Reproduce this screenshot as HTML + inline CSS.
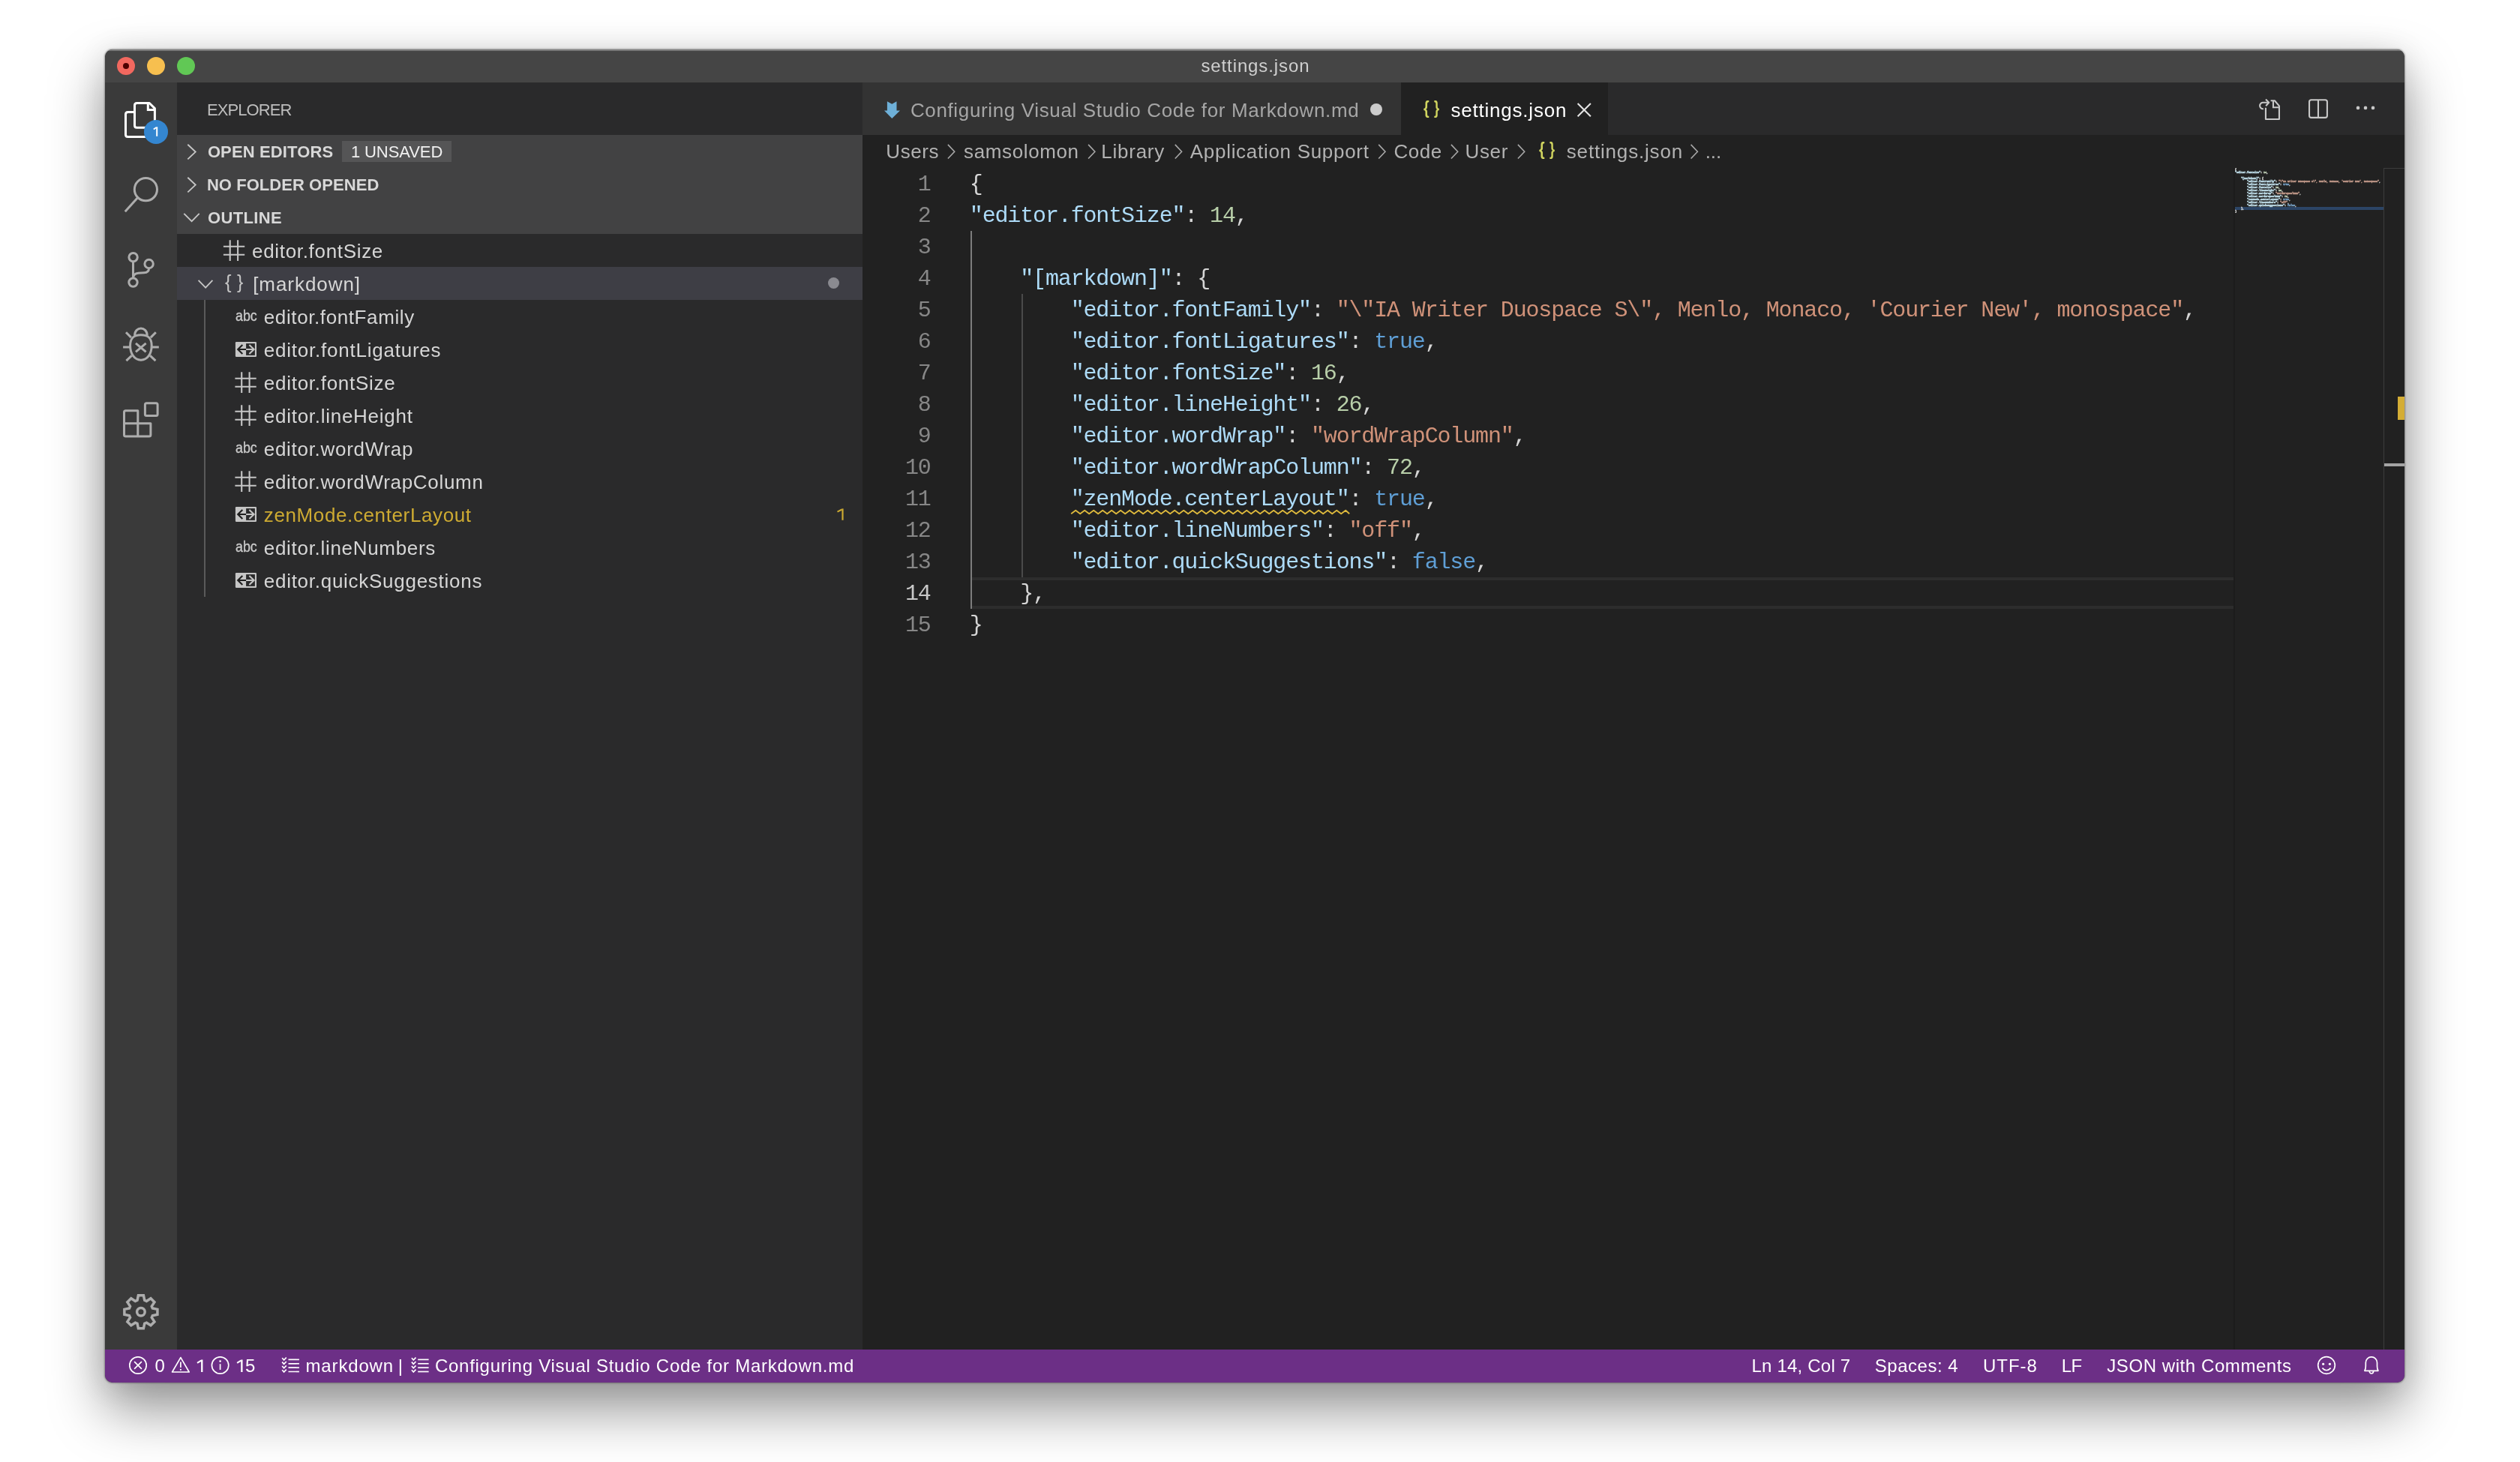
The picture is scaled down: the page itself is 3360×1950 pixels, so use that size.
<!DOCTYPE html>
<html><head><meta charset="utf-8"><title>settings.json</title>
<style>
html,body{margin:0;padding:0;}
body{width:3360px;height:1950px;background:#ffffff;overflow:hidden;position:relative;font-family:"Liberation Sans",sans-serif;}
#win{position:absolute;left:140px;top:66px;width:3066px;height:1778px;border-radius:10px;overflow:hidden;background:#212121;will-change:transform;}
#shadow{position:absolute;left:140px;top:66px;width:3066px;height:1778px;border-radius:10px;box-shadow:0 0 2px 1px rgba(0,0,0,0.30),0 36px 72px 2px rgba(0,0,0,0.40),0 4px 40px rgba(0,0,0,0.10);}
.b{position:absolute;display:block;}
.t{position:absolute;white-space:pre;line-height:1;font-family:"Liberation Sans",sans-serif;}
.m{position:absolute;white-space:pre;line-height:1;font-family:"Liberation Mono",monospace;}
</style></head><body>
<div id="shadow"></div>
<div id="win">
<div class="b" style="left:0px;top:0px;width:3066px;height:44px;background:#454545;"></div>
<div class="b" style="left:0px;top:0px;width:3066px;height:1.5px;background:rgba(255,255,255,0.28);"></div>
<div class="b" style="left:0px;top:44px;width:96px;height:1690px;background:#3a3a3a;"></div>
<div class="b" style="left:96px;top:44px;width:914px;height:1690px;background:#2a2a2b;"></div>
<div class="b" style="left:1010px;top:44px;width:2056px;height:70px;background:#2a2a2b;"></div>
<div class="b" style="left:1010px;top:44px;width:718px;height:70px;background:#333333;"></div>
<div class="b" style="left:1728px;top:44px;width:276px;height:70px;background:#212121;"></div>
<div class="b" style="left:1010px;top:114px;width:2056px;height:1620px;background:#212121;"></div>
<div class="b" style="left:0px;top:1734px;width:3066px;height:44px;background:#6c2f86;"></div>
<div class="b" style="left:96px;top:114px;width:914px;height:132px;background:#424243;"></div>
<div class="b" style="left:96px;top:290px;width:914px;height:44px;background:#3e3e45;"></div>
<div class="b" style="left:316px;top:122px;width:146px;height:28px;background:#555556;"></div>
<div class="b" style="left:132px;top:334px;width:2px;height:396px;background:#5a5a5a;"></div>
<div class="b" style="left:964px;top:304px;width:15px;height:15px;background:#8a8a90;border-radius:50%;"></div>
<div class="b" style="left:1687px;top:72px;width:16px;height:16px;background:#cccccc;border-radius:50%;"></div>
<div class="b" style="left:16px;top:10px;width:24px;height:24px;background:#f2685f;border-radius:50%;"></div>
<div class="b" style="left:56px;top:10px;width:24px;height:24px;background:#f7bf4f;border-radius:50%;"></div>
<div class="b" style="left:96px;top:10px;width:24px;height:24px;background:#61c855;border-radius:50%;"></div>
<div class="b" style="left:24px;top:18px;width:8px;height:8px;background:#4d0000;border-radius:50%;"></div>
<svg class="b" style="left:20px;top:64px;" width="70" height="66" viewBox="160 130 70 66"><g fill="none" stroke="#ffffff" stroke-width="3" stroke-linejoin="round"><path d="M199.2,137.5 H182.5 Q179.5,137.5 179.5,140.5 V167.2 Q179.5,170.2 182.5,170.2 H206.4 V144.6 Z"/><path d="M197.3,137.5 V146.5 H206.4" stroke-linejoin="miter"/><path d="M179.5,149.5 H170.5 Q167.5,149.5 167.5,152.5 V179.4 Q167.5,182.4 170.5,182.4 H192.5 Q195.5,182.4 195.5,179.4 V170.2"/></g><circle cx="208" cy="175.9" r="16" fill="#3486d0"/></svg>
<svg class="b" style="left:20px;top:164px;" width="60" height="60" viewBox="160 230 60 60"><g fill="none" stroke="#adadad" stroke-width="3"><circle cx="194.4" cy="252.7" r="15.1"/><path d="M183.7,263.4 L166.8,282.3"/></g></svg>
<svg class="b" style="left:20px;top:264px;" width="60" height="60" viewBox="160 330 60 60"><g fill="none" stroke="#adadad" stroke-width="3"><circle cx="177.6" cy="343.1" r="5.7"/><circle cx="177.5" cy="376.6" r="5.7"/><circle cx="198.6" cy="352" r="5.7"/><path d="M177.5,348.8 V370.9"/><path d="M198.6,357.7 Q198.6,363.4 192,363.8 L184.5,364.3 Q177.6,365 177.6,371"/></g></svg>
<svg class="b" style="left:20px;top:364px;" width="60" height="60" viewBox="160 430 60 60"><g fill="none" stroke="#adadad" stroke-width="3"><path d="M187.9,446.8 C197,446.8 202.2,450 202.2,461 C202.2,472 196.5,480.2 187.9,480.2 C179.3,480.2 173.6,472 173.6,461 C173.6,450 178.8,446.8 187.9,446.8 Z"/><path d="M179.6,447.5 C179.6,434.8 196.2,434.8 196.2,447.5"/><path d="M168,443.3 L174.8,450.1 M207.8,443.3 L201,450.1 M164.1,463 H173 M211.8,463 H202.8 M168.4,481.2 L175.6,474.4 M207.4,481.2 L200.2,474.4"/><path d="M181,457.8 L194.6,469.4 M194.6,457.8 L181,469.4"/></g></svg>
<svg class="b" style="left:20px;top:464px;" width="60" height="60" viewBox="160 530 60 60"><g fill="none" stroke="#adadad" stroke-width="3" stroke-linejoin="round"><path d="M167.5,547.7 H183.8 V564.8 H200.9 V579.9 Q200.9,581.9 198.9,581.9 H167.5 Q165.5,581.9 165.5,579.9 V549.7 Q165.5,547.7 167.5,547.7 Z"/><path d="M165.5,564.8 H183.8 V581.9"/><rect x="193.4" y="537.8" width="16.7" height="16.7" rx="2"/></g></svg>
<svg class="b" style="left:20px;top:1654px;" width="60" height="60" viewBox="160 1720 60 60"><g fill="none" stroke="#adadad" stroke-width="3.5" stroke-linejoin="miter"><path d="M183.03,1734.35 L184.41,1727.77 L191.39,1727.77 L192.77,1734.35 L195.38,1735.43 L201.01,1731.76 L205.94,1736.69 L202.27,1742.32 L203.35,1744.93 L209.93,1746.31 L209.93,1753.29 L203.35,1754.67 L202.27,1757.28 L205.94,1762.91 L201.01,1767.84 L195.38,1764.17 L192.77,1765.25 L191.39,1771.83 L184.41,1771.83 L183.03,1765.25 L180.42,1764.17 L174.79,1767.84 L169.86,1762.91 L173.53,1757.28 L172.45,1754.67 L165.87,1753.29 L165.87,1746.31 L172.45,1744.93 L173.53,1742.32 L169.86,1736.69 L174.79,1731.76 L180.42,1735.43 Z"/><circle cx="187.9" cy="1749.8" r="5.3"/></g></svg>
<svg class="b" style="left:100px;top:114px;" width="60" height="220" viewBox="240 180 60 220"><g fill="none" stroke="#c5c5c5" stroke-width="1.9"><path d="M250.3,192.8 L260.7,202.6 L250.3,212.4"/><path d="M250.3,236.8 L260.7,246.6 L250.3,256.4"/><path d="M245.3,284.9 L255.6,295.2 L265.7,284.9"/><path d="M264.6,373.9 L274.1,383.6 L283.4,373.9"/></g></svg>
<svg class="b" style="left:150px;top:246px;" width="70" height="490" viewBox="290 312 70 490"><path d="M306.7,320.2 V347.9 M317.09999999999997,320.2 V347.9 M297.9,328.7 H326.2 M297.9,339.7 H326.2" fill="none" stroke="#c5c5c5" stroke-width="2.1"/><rect x="313.9" y="456" width="28.1" height="20" rx="1.2" fill="#c5c5c5"/><rect x="328.1" y="458.1" width="11.8" height="15.8" fill="#2a2a2b"/><path d="M323.3,459.9 L317.2,466 L323.3,472.1 M317.4,466 H328.1" fill="none" stroke="#1e1e1e" stroke-width="2.1"/><path d="M332.4,460 L338.6,466 L332.4,472 M328.1,466 H338.4" fill="none" stroke="#c5c5c5" stroke-width="2.1"/><path d="M322.2,496.2 V523.9 M332.59999999999997,496.2 V523.9 M313.4,504.7 H341.7 M313.4,515.7 H341.7" fill="none" stroke="#c5c5c5" stroke-width="2.1"/><path d="M322.2,540.2 V567.9 M332.59999999999997,540.2 V567.9 M313.4,548.7 H341.7 M313.4,559.7 H341.7" fill="none" stroke="#c5c5c5" stroke-width="2.1"/><path d="M322.2,628.2 V655.9 M332.59999999999997,628.2 V655.9 M313.4,636.7 H341.7 M313.4,647.7 H341.7" fill="none" stroke="#c5c5c5" stroke-width="2.1"/><rect x="313.9" y="676" width="28.1" height="20" rx="1.2" fill="#c5c5c5"/><rect x="328.1" y="678.1" width="11.8" height="15.8" fill="#2a2a2b"/><path d="M323.3,679.9 L317.2,686 L323.3,692.1 M317.4,686 H328.1" fill="none" stroke="#1e1e1e" stroke-width="2.1"/><path d="M332.4,680 L338.6,686 L332.4,692 M328.1,686 H338.4" fill="none" stroke="#c5c5c5" stroke-width="2.1"/><rect x="313.9" y="764" width="28.1" height="20" rx="1.2" fill="#c5c5c5"/><rect x="328.1" y="766.1" width="11.8" height="15.8" fill="#2a2a2b"/><path d="M323.3,767.9 L317.2,774 L323.3,780.1 M317.4,774 H328.1" fill="none" stroke="#1e1e1e" stroke-width="2.1"/><path d="M332.4,768 L338.6,774 L332.4,780 M328.1,774 H338.4" fill="none" stroke="#c5c5c5" stroke-width="2.1"/></svg>
<svg class="b" style="left:60px;top:99px;" width="16" height="22" viewBox="200 165 16 22"><path d="M209.20,169.20 V181.80" stroke="#ffffff" stroke-width="2.0" fill="none"/><path d="M204.80,172.60 L208.40,170.08" stroke="#ffffff" stroke-width="1.84" fill="none"/></svg>
<svg class="b" style="left:970px;top:604px;" width="20" height="30" viewBox="1110 670 20 30"><path d="M1123.50,678.40 V693.80" stroke="#cdaa32" stroke-width="2.2" fill="none"/><path d="M1116.50,682.56 L1122.60,679.48" stroke="#cdaa32" stroke-width="2.02" fill="none"/></svg>
<svg class="b" style="left:118px;top:1742px;" width="70" height="26" viewBox="258 1808 70 26"><path d="M269.25,1813.40 V1829.90" stroke="#ffffff" stroke-width="2.3" fill="none"/><path d="M263.00,1817.86 L268.30,1814.56" stroke="#ffffff" stroke-width="2.12" fill="none"/><path d="M322.35,1813.40 V1829.90" stroke="#ffffff" stroke-width="2.3" fill="none"/><path d="M316.10,1817.86 L321.40,1814.56" stroke="#ffffff" stroke-width="2.12" fill="none"/></svg>
<div class="b" style="left:1156px;top:704px;width:1684px;height:4px;background:#2d2d2d;"></div>
<div class="b" style="left:1156px;top:742px;width:1684px;height:4px;background:#2d2d2d;"></div>
<div class="b" style="left:1154px;top:242px;width:2px;height:504px;background:#7c7c7c;"></div>
<div class="b" style="left:1222px;top:326px;width:2px;height:378px;background:#4a4a4a;"></div>
<div class="m" style="left:1152.80px;top:164.82px;font-size:30px;letter-spacing:-1.1469px"><span style="color:#d6d6d6">{</span></div>
<div class="m" style="left:1083.84px;top:164.82px;font-size:30px;letter-spacing:-1.1469px;color:#878787">1</div>
<div class="m" style="left:1152.80px;top:206.82px;font-size:30px;letter-spacing:-1.1469px"><span style="color:#addbf8">&quot;editor.fontSize&quot;</span><span style="color:#d6d6d6">: </span><span style="color:#b8cfa9">14</span><span style="color:#d6d6d6">,</span></div>
<div class="m" style="left:1083.84px;top:206.82px;font-size:30px;letter-spacing:-1.1469px;color:#878787">2</div>
<div class="m" style="left:1083.84px;top:248.82px;font-size:30px;letter-spacing:-1.1469px;color:#878787">3</div>
<div class="m" style="left:1152.80px;top:290.82px;font-size:30px;letter-spacing:-1.1469px"><span style="color:#d6d6d6">    </span><span style="color:#addbf8">&quot;[markdown]&quot;</span><span style="color:#d6d6d6">: {</span></div>
<div class="m" style="left:1083.84px;top:290.82px;font-size:30px;letter-spacing:-1.1469px;color:#878787">4</div>
<div class="m" style="left:1152.80px;top:332.82px;font-size:30px;letter-spacing:-1.1469px"><span style="color:#d6d6d6">        </span><span style="color:#addbf8">&quot;editor.fontFamily&quot;</span><span style="color:#d6d6d6">: </span><span style="color:#d09279">&quot;\&quot;IA Writer Duospace S\&quot;, Menlo, Monaco, &#x27;Courier New&#x27;, monospace&quot;</span><span style="color:#d6d6d6">,</span></div>
<div class="m" style="left:1083.84px;top:332.82px;font-size:30px;letter-spacing:-1.1469px;color:#878787">5</div>
<div class="m" style="left:1152.80px;top:374.82px;font-size:30px;letter-spacing:-1.1469px"><span style="color:#d6d6d6">        </span><span style="color:#addbf8">&quot;editor.fontLigatures&quot;</span><span style="color:#d6d6d6">: </span><span style="color:#5f9fd6">true</span><span style="color:#d6d6d6">,</span></div>
<div class="m" style="left:1083.84px;top:374.82px;font-size:30px;letter-spacing:-1.1469px;color:#878787">6</div>
<div class="m" style="left:1152.80px;top:416.82px;font-size:30px;letter-spacing:-1.1469px"><span style="color:#d6d6d6">        </span><span style="color:#addbf8">&quot;editor.fontSize&quot;</span><span style="color:#d6d6d6">: </span><span style="color:#b8cfa9">16</span><span style="color:#d6d6d6">,</span></div>
<div class="m" style="left:1083.84px;top:416.82px;font-size:30px;letter-spacing:-1.1469px;color:#878787">7</div>
<div class="m" style="left:1152.80px;top:458.82px;font-size:30px;letter-spacing:-1.1469px"><span style="color:#d6d6d6">        </span><span style="color:#addbf8">&quot;editor.lineHeight&quot;</span><span style="color:#d6d6d6">: </span><span style="color:#b8cfa9">26</span><span style="color:#d6d6d6">,</span></div>
<div class="m" style="left:1083.84px;top:458.82px;font-size:30px;letter-spacing:-1.1469px;color:#878787">8</div>
<div class="m" style="left:1152.80px;top:500.82px;font-size:30px;letter-spacing:-1.1469px"><span style="color:#d6d6d6">        </span><span style="color:#addbf8">&quot;editor.wordWrap&quot;</span><span style="color:#d6d6d6">: </span><span style="color:#d09279">&quot;wordWrapColumn&quot;</span><span style="color:#d6d6d6">,</span></div>
<div class="m" style="left:1083.84px;top:500.82px;font-size:30px;letter-spacing:-1.1469px;color:#878787">9</div>
<div class="m" style="left:1152.80px;top:542.82px;font-size:30px;letter-spacing:-1.1469px"><span style="color:#d6d6d6">        </span><span style="color:#addbf8">&quot;editor.wordWrapColumn&quot;</span><span style="color:#d6d6d6">: </span><span style="color:#b8cfa9">72</span><span style="color:#d6d6d6">,</span></div>
<div class="m" style="left:1066.99px;top:542.82px;font-size:30px;letter-spacing:-1.1469px;color:#878787">10</div>
<div class="m" style="left:1152.80px;top:584.82px;font-size:30px;letter-spacing:-1.1469px"><span style="color:#d6d6d6">        </span><span style="color:#addbf8">&quot;zenMode.centerLayout&quot;</span><span style="color:#d6d6d6">: </span><span style="color:#5f9fd6">true</span><span style="color:#d6d6d6">,</span></div>
<div class="m" style="left:1066.99px;top:584.82px;font-size:30px;letter-spacing:-1.1469px;color:#878787">11</div>
<div class="m" style="left:1152.80px;top:626.82px;font-size:30px;letter-spacing:-1.1469px"><span style="color:#d6d6d6">        </span><span style="color:#addbf8">&quot;editor.lineNumbers&quot;</span><span style="color:#d6d6d6">: </span><span style="color:#d09279">&quot;off&quot;</span><span style="color:#d6d6d6">,</span></div>
<div class="m" style="left:1066.99px;top:626.82px;font-size:30px;letter-spacing:-1.1469px;color:#878787">12</div>
<div class="m" style="left:1152.80px;top:668.82px;font-size:30px;letter-spacing:-1.1469px"><span style="color:#d6d6d6">        </span><span style="color:#addbf8">&quot;editor.quickSuggestions&quot;</span><span style="color:#d6d6d6">: </span><span style="color:#5f9fd6">false</span><span style="color:#d6d6d6">,</span></div>
<div class="m" style="left:1066.99px;top:668.82px;font-size:30px;letter-spacing:-1.1469px;color:#878787">13</div>
<div class="m" style="left:1152.80px;top:710.82px;font-size:30px;letter-spacing:-1.1469px"><span style="color:#d6d6d6">    </span><span style="color:#d6d6d6">},</span></div>
<div class="m" style="left:1066.99px;top:710.82px;font-size:30px;letter-spacing:-1.1469px;color:#c8c8c8">14</div>
<div class="m" style="left:1152.80px;top:752.82px;font-size:30px;letter-spacing:-1.1469px"><span style="color:#d6d6d6">}</span></div>
<div class="m" style="left:1066.99px;top:752.82px;font-size:30px;letter-spacing:-1.1469px;color:#878787">15</div>
<svg class="b" style="left:1280px;top:608px;" width="390" height="16" viewBox="1420 674 390 16"><path d="M1428.2,685.3 L1434.2,680.7 L1440.2,685.3 L1446.2,680.7 L1452.2,685.3 L1458.2,680.7 L1464.2,685.3 L1470.2,680.7 L1476.2,685.3 L1482.2,680.7 L1488.2,685.3 L1494.2,680.7 L1500.2,685.3 L1506.2,680.7 L1512.2,685.3 L1518.2,680.7 L1524.2,685.3 L1530.2,680.7 L1536.2,685.3 L1542.2,680.7 L1548.2,685.3 L1554.2,680.7 L1560.2,685.3 L1566.2,680.7 L1572.2,685.3 L1578.2,680.7 L1584.2,685.3 L1590.2,680.7 L1596.2,685.3 L1602.2,680.7 L1608.2,685.3 L1614.2,680.7 L1620.2,685.3 L1626.2,680.7 L1632.2,685.3 L1638.2,680.7 L1644.2,685.3 L1650.2,680.7 L1656.2,685.3 L1662.2,680.7 L1668.2,685.3 L1674.2,680.7 L1680.2,685.3 L1686.2,680.7 L1692.2,685.3 L1698.2,680.7 L1704.2,685.3 L1710.2,680.7 L1716.2,685.3 L1722.2,680.7 L1728.2,685.3 L1734.2,680.7 L1740.2,685.3 L1746.2,680.7 L1752.2,685.3 L1758.2,680.7 L1764.2,685.3 L1770.2,680.7 L1776.2,685.3 L1782.2,680.7 L1788.2,685.3 L1794.2,680.7 L1799.2,685.3" fill="none" stroke="#dcb83c" stroke-width="1.9" stroke-linejoin="round"/></svg>
<svg class="b" style="left:2838px;top:158px;" width="202" height="64" viewBox="2978 224 202 64"><rect x="2980" y="276" width="198" height="4" fill="#2c4566"/></svg>
<div class="m" style="left:2840px;top:158px;font-size:30px;letter-spacing:-1.1469px;font-weight:bold;-webkit-text-stroke:5px;transform:scale(0.11865,0.09524);transform-origin:0 0;opacity:0.85;filter:saturate(0.65) brightness(1.12)"><div style="height:42px;line-height:42px"><span style="color:#d6d6d6">{</span></div><div style="height:42px;line-height:42px"><span style="color:#addbf8">&quot;editor.fontSize&quot;</span><span style="color:#d6d6d6">: </span><span style="color:#b8cfa9">14</span><span style="color:#d6d6d6">,</span></div><div style="height:42px;line-height:42px"></div><div style="height:42px;line-height:42px"><span style="color:#d6d6d6">    </span><span style="color:#addbf8">&quot;[markdown]&quot;</span><span style="color:#d6d6d6">: {</span></div><div style="height:42px;line-height:42px"><span style="color:#d6d6d6">        </span><span style="color:#addbf8">&quot;editor.fontFamily&quot;</span><span style="color:#d6d6d6">: </span><span style="color:#d09279">&quot;\&quot;IA Writer Duospace S\&quot;, Menlo, Monaco, &#x27;Courier New&#x27;, monospace&quot;</span><span style="color:#d6d6d6">,</span></div><div style="height:42px;line-height:42px"><span style="color:#d6d6d6">        </span><span style="color:#addbf8">&quot;editor.fontLigatures&quot;</span><span style="color:#d6d6d6">: </span><span style="color:#5f9fd6">true</span><span style="color:#d6d6d6">,</span></div><div style="height:42px;line-height:42px"><span style="color:#d6d6d6">        </span><span style="color:#addbf8">&quot;editor.fontSize&quot;</span><span style="color:#d6d6d6">: </span><span style="color:#b8cfa9">16</span><span style="color:#d6d6d6">,</span></div><div style="height:42px;line-height:42px"><span style="color:#d6d6d6">        </span><span style="color:#addbf8">&quot;editor.lineHeight&quot;</span><span style="color:#d6d6d6">: </span><span style="color:#b8cfa9">26</span><span style="color:#d6d6d6">,</span></div><div style="height:42px;line-height:42px"><span style="color:#d6d6d6">        </span><span style="color:#addbf8">&quot;editor.wordWrap&quot;</span><span style="color:#d6d6d6">: </span><span style="color:#d09279">&quot;wordWrapColumn&quot;</span><span style="color:#d6d6d6">,</span></div><div style="height:42px;line-height:42px"><span style="color:#d6d6d6">        </span><span style="color:#addbf8">&quot;editor.wordWrapColumn&quot;</span><span style="color:#d6d6d6">: </span><span style="color:#b8cfa9">72</span><span style="color:#d6d6d6">,</span></div><div style="height:42px;line-height:42px"><span style="color:#d6d6d6">        </span><span style="color:#addbf8">&quot;zenMode.centerLayout&quot;</span><span style="color:#d6d6d6">: </span><span style="color:#5f9fd6">true</span><span style="color:#d6d6d6">,</span></div><div style="height:42px;line-height:42px"><span style="color:#d6d6d6">        </span><span style="color:#addbf8">&quot;editor.lineNumbers&quot;</span><span style="color:#d6d6d6">: </span><span style="color:#d09279">&quot;off&quot;</span><span style="color:#d6d6d6">,</span></div><div style="height:42px;line-height:42px"><span style="color:#d6d6d6">        </span><span style="color:#addbf8">&quot;editor.quickSuggestions&quot;</span><span style="color:#d6d6d6">: </span><span style="color:#5f9fd6">false</span><span style="color:#d6d6d6">,</span></div><div style="height:42px;line-height:42px"><span style="color:#d6d6d6">    </span><span style="color:#d6d6d6">},</span></div><div style="height:42px;line-height:42px"><span style="color:#d6d6d6">}</span></div></div>
<div class="b" style="left:2838px;top:158px;width:2px;height:1576px;background:#1c1c1c;"></div>
<div class="b" style="left:3038px;top:158px;width:1px;height:1576px;background:#3c3c3c;"></div>
<div class="b" style="left:3038px;top:158px;width:28px;height:1px;background:#3c3c3c;"></div>
<div class="b" style="left:3057px;top:463px;width:9px;height:31px;background:#d4ad35;"></div>
<div class="b" style="left:3039px;top:552px;width:27px;height:4px;background:#a4a4a4;"></div>
<svg class="b" style="left:1030px;top:59px;" width="40" height="40" viewBox="1170 125 40 40"><path d="M1182.9,135.2 L1189.3,138.8 L1195.5,135.2 V147.4 H1200 L1189.3,158.1 L1179,147.4 H1182.9 Z" fill="#6eb0d8"/></svg>
<svg class="b" style="left:1955px;top:64px;" width="35" height="35" viewBox="2095 130 35 35"><path d="M2103.6,138 L2120.9,155.3 M2120.9,138 L2103.6,155.3" fill="none" stroke="#e4e4e4" stroke-width="2.1"/></svg>
<svg class="b" style="left:2865px;top:59px;" width="170" height="45" viewBox="3005 125 170 45"><g fill="none" stroke="#c8c8c8" stroke-width="2.1" stroke-linejoin="round"><path d="M3020.95,143.8 V159 H3038.95 V141.4 L3032.9,134.3 H3027.6"/><path d="M3030.95,134.3 V143.3 H3038.95" stroke-linejoin="miter"/><path d="M3017.9,145.25 A4.27,4.27 0 1 1 3016.9,136.7 H3024.8"/><path d="M3021,132.6 L3025.2,136.7 L3021.2,141.2"/><rect x="3079.05" y="133.2" width="23.85" height="23.7" rx="2.6"/><path d="M3090.95,133.2 V156.9"/></g><circle cx="3144" cy="143.9" r="2.3" fill="#c8c8c8"/><circle cx="3154" cy="143.9" r="2.3" fill="#c8c8c8"/><circle cx="3164" cy="143.9" r="2.3" fill="#c8c8c8"/></svg>
<svg class="b" style="left:1110px;top:119px;" width="1030" height="35" viewBox="1250 185 1030 35"><g fill="none" stroke="#a8a8a8" stroke-width="1.6"><path d="M1263.8999999999999,192.9 L1272.7,202.2 L1263.8999999999999,211.5"/><path d="M1451.1,192.9 L1459.9,202.2 L1451.1,211.5"/><path d="M1566.8,192.9 L1575.6000000000001,202.2 L1566.8,211.5"/><path d="M1838.1999999999998,192.9 L1847.0,202.2 L1838.1999999999998,211.5"/><path d="M1934.8999999999999,192.9 L1943.7,202.2 L1934.8999999999999,211.5"/><path d="M2023.8999999999999,192.9 L2032.7,202.2 L2023.8999999999999,211.5"/><path d="M2254.6,192.9 L2263.4,202.2 L2254.6,211.5"/></g></svg>
<svg class="b" style="left:25px;top:1736px;" width="420" height="40" viewBox="165 1802 420 40"><g fill="none" stroke="#ffffff" stroke-width="1.7"><circle cx="184" cy="1821" r="11.2"/><path d="M179.1,1816.1 L188.9,1825.9 M188.9,1816.1 L179.1,1825.9"/><path d="M240.9,1810.6 L252.2,1830 H229.6 Z" stroke-linejoin="round"/><path d="M240.9,1816.5 V1824"/><circle cx="293.6" cy="1821" r="11.2"/><path d="M293.6,1819.3 V1827"/></g><circle cx="240.9" cy="1826.8" r="1.1" fill="#ffffff"/><circle cx="293.6" cy="1815.6" r="1.3" fill="#ffffff"/><g fill="none" stroke="#ffffff" stroke-width="1.7"><path d="M384.5,1813.4 H398.9"/><path d="M376.2,1811.2 L378.59999999999997,1814.0 L381.8,1810.6000000000001"/><path d="M384.5,1818.8 H398.9"/><path d="M376.2,1816.6 L378.59999999999997,1819.3999999999999 L381.8,1816.0"/><path d="M384.5,1824.2 H398.9"/><path d="M376.2,1822.0 L378.59999999999997,1824.8 L381.8,1821.4"/><path d="M384.5,1829.5 H398.9"/><path d="M376.2,1827.3 L378.59999999999997,1830.1 L381.8,1826.7"/></g><g fill="none" stroke="#ffffff" stroke-width="1.7"><path d="M557.1999999999999,1813.4 H571.6"/><path d="M548.9,1811.2 L551.3,1814.0 L554.5,1810.6000000000001"/><path d="M557.1999999999999,1818.8 H571.6"/><path d="M548.9,1816.6 L551.3,1819.3999999999999 L554.5,1816.0"/><path d="M557.1999999999999,1824.2 H571.6"/><path d="M548.9,1822.0 L551.3,1824.8 L554.5,1821.4"/><path d="M557.1999999999999,1829.5 H571.6"/><path d="M548.9,1827.3 L551.3,1830.1 L554.5,1826.7"/></g></svg>
<svg class="b" style="left:2945px;top:1736px;" width="100" height="40" viewBox="3085 1802 100 40"><g fill="none" stroke="#ffffff" stroke-width="1.7"><circle cx="3102" cy="1821" r="11.3"/><path d="M3096.4,1824.6 Q3102,1830.9 3107.6,1824.6"/><path d="M3152.9,1828.3 Q3154.3,1826 3154.3,1822 V1817.4 A7.6,7.6 0 0 1 3169.5,1817.4 V1822 Q3169.5,1826 3170.9,1828.3 Z" stroke-linejoin="round"/><path d="M3159.2,1828.8 A2.7,3.2 0 0 0 3164.6,1828.8"/></g><circle cx="3097.6" cy="1819.3" r="1.6" fill="#ffffff"/><circle cx="3106.4" cy="1819.3" r="1.6" fill="#ffffff"/></svg>
<span class="t" style="left:1461.40px;top:9.68px;font-size:24px;color:#cfcfcf;letter-spacing:0.895px;">settings.json</span>
<span class="t" style="left:135.90px;top:69.87px;font-size:22px;color:#bdbdbd;letter-spacing:-0.890px;">EXPLORER</span>
<span class="t" style="left:136.90px;top:126.37px;font-size:22px;color:#d8d8d8;letter-spacing:0.120px;font-weight:bold;">OPEN EDITORS</span>
<span class="t" style="left:327.90px;top:126.37px;font-size:22px;color:#f0f0f0;letter-spacing:-0.086px;">1 UNSAVED</span>
<span class="t" style="left:135.90px;top:170.37px;font-size:22px;color:#d8d8d8;letter-spacing:0.054px;font-weight:bold;">NO FOLDER OPENED</span>
<span class="t" style="left:136.90px;top:214.37px;font-size:22px;color:#d8d8d8;letter-spacing:0.387px;font-weight:bold;">OUTLINE</span>
<span class="t" style="left:196.10px;top:255.99px;font-size:26px;color:#d6d6d6;letter-spacing:0.671px;">editor.fontSize</span>
<span class="t" style="left:197.20px;top:299.99px;font-size:26px;color:#d6d6d6;letter-spacing:0.938px;">[markdown]</span>
<span class="t" style="left:211.80px;top:343.99px;font-size:26px;color:#d6d6d6;letter-spacing:0.603px;">editor.fontFamily</span>
<span class="t" style="left:211.80px;top:387.99px;font-size:26px;color:#d6d6d6;letter-spacing:0.771px;">editor.fontLigatures</span>
<span class="t" style="left:211.80px;top:431.99px;font-size:26px;color:#d6d6d6;letter-spacing:0.728px;">editor.fontSize</span>
<span class="t" style="left:211.80px;top:475.99px;font-size:26px;color:#d6d6d6;letter-spacing:0.729px;">editor.lineHeight</span>
<span class="t" style="left:211.80px;top:519.99px;font-size:26px;color:#d6d6d6;letter-spacing:0.702px;">editor.wordWrap</span>
<span class="t" style="left:211.80px;top:563.99px;font-size:26px;color:#d6d6d6;letter-spacing:0.682px;">editor.wordWrapColumn</span>
<span class="t" style="left:211.80px;top:607.99px;font-size:26px;color:#cdaa32;letter-spacing:0.617px;">zenMode.centerLayout</span>
<span class="t" style="left:211.80px;top:651.99px;font-size:26px;color:#d6d6d6;letter-spacing:0.690px;">editor.lineNumbers</span>
<span class="t" style="left:211.80px;top:695.99px;font-size:26px;color:#d6d6d6;letter-spacing:0.726px;">editor.quickSuggestions</span>
<span class="t" style="left:1073.90px;top:67.99px;font-size:26px;color:#a6a6a6;letter-spacing:0.641px;">Configuring Visual Studio Code for Markdown.md</span>
<span class="t" style="left:1794.40px;top:67.99px;font-size:26px;color:#ffffff;letter-spacing:0.795px;">settings.json</span>
<span class="t" style="left:1041.30px;top:123.39px;font-size:26px;color:#b2b2b2;letter-spacing:0.576px;">Users</span>
<span class="t" style="left:1145.10px;top:123.39px;font-size:26px;color:#b2b2b2;letter-spacing:0.619px;">samsolomon</span>
<span class="t" style="left:1328.20px;top:123.39px;font-size:26px;color:#b2b2b2;letter-spacing:0.771px;">Library</span>
<span class="t" style="left:1446.80px;top:123.39px;font-size:26px;color:#b2b2b2;letter-spacing:0.702px;">Application Support</span>
<span class="t" style="left:1718.40px;top:123.39px;font-size:26px;color:#b2b2b2;letter-spacing:0.535px;">Code</span>
<span class="t" style="left:1813.50px;top:123.39px;font-size:26px;color:#b2b2b2;letter-spacing:0.655px;">User</span>
<span class="t" style="left:1948.80px;top:123.39px;font-size:26px;color:#b2b2b2;letter-spacing:0.820px;">settings.json</span>
<span class="t" style="left:2133.70px;top:123.39px;font-size:26px;color:#b2b2b2;letter-spacing:-0.124px;">...</span>
<span class="t" style="left:66.40px;top:1743.68px;font-size:24px;color:#ffffff;">0</span>
<span class="t" style="left:187.10px;top:1743.68px;font-size:24px;color:#ffffff;">5</span>
<span class="t" style="left:267.50px;top:1743.68px;font-size:24px;color:#ffffff;letter-spacing:0.849px;">markdown</span>
<span class="t" style="left:390.80px;top:1743.68px;font-size:24px;color:#ffffff;">|</span>
<span class="t" style="left:439.90px;top:1743.68px;font-size:24px;color:#ffffff;letter-spacing:0.740px;">Configuring Visual Studio Code for Markdown.md</span>
<span class="t" style="left:2195.50px;top:1743.68px;font-size:24px;color:#ffffff;letter-spacing:0.202px;">Ln 14, Col 7</span>
<span class="t" style="left:2359.80px;top:1743.68px;font-size:24px;color:#ffffff;letter-spacing:0.514px;">Spaces: 4</span>
<span class="t" style="left:2504.00px;top:1743.68px;font-size:24px;color:#ffffff;letter-spacing:0.964px;">UTF-8</span>
<span class="t" style="left:2608.80px;top:1743.68px;font-size:24px;color:#ffffff;letter-spacing:-0.748px;">LF</span>
<span class="t" style="left:2669.30px;top:1743.68px;font-size:24px;color:#ffffff;letter-spacing:0.568px;">JSON with Comments</span>
<span class="t" style="left:173.90px;top:344.12px;font-size:21px;color:#cacaca;-webkit-text-stroke:0.35px #cacaca;transform:scaleX(0.8484);transform-origin:0 0;">abc</span>
<span class="t" style="left:173.90px;top:520.12px;font-size:21px;color:#cacaca;-webkit-text-stroke:0.35px #cacaca;transform:scaleX(0.8484);transform-origin:0 0;">abc</span>
<span class="t" style="left:173.90px;top:652.12px;font-size:21px;color:#cacaca;-webkit-text-stroke:0.35px #cacaca;transform:scaleX(0.8484);transform-origin:0 0;">abc</span>
<span class="t" style="left:160.30px;top:298.23px;font-size:25px;color:#c5c5c5;transform:scaleX(1.0250);transform-origin:0 0;">{</span>
<span class="t" style="left:176.00px;top:298.23px;font-size:25px;color:#c5c5c5;transform:scaleX(0.9875);transform-origin:0 0;">}</span>
<span class="t" style="left:1758.10px;top:67.13px;font-size:23px;color:#d0d45f;font-weight:bold;transform:scaleX(0.8556);transform-origin:0 0;">{</span>
<span class="t" style="left:1772.10px;top:67.13px;font-size:23px;color:#d0d45f;font-weight:bold;transform:scaleX(0.7889);transform-origin:0 0;">}</span>
<span class="t" style="left:1912.40px;top:122.13px;font-size:23px;color:#d0d45f;font-weight:bold;transform:scaleX(0.8556);transform-origin:0 0;">{</span>
<span class="t" style="left:1926.20px;top:122.13px;font-size:23px;color:#d0d45f;font-weight:bold;transform:scaleX(0.7889);transform-origin:0 0;">}</span>
</div>
</body></html>
